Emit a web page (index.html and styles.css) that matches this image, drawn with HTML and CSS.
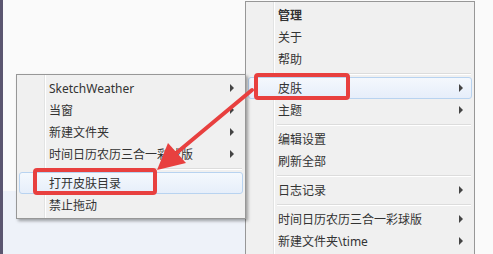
FILE: index.html
```html
<!DOCTYPE html>
<html lang="zh-CN">
<head>
    <meta charset="UTF-8">
    <title>皮肤菜单</title>
    <link rel="stylesheet" href="styles.css">
</head>
<body>
    <div class="desktop">
        <!-- 右键主菜单 -->
        <div class="menu menu-main">
            <div class="item bold">管理</div>
            <div class="item">关于</div>
            <div class="item">帮助</div>
            <div class="sep"></div>
            <div class="item hot">皮肤<span class="arrow"></span></div>
            <div class="item">主题<span class="arrow"></span></div>
            <div class="sep"></div>
            <div class="item">编辑设置</div>
            <div class="item">刷新全部</div>
            <div class="sep"></div>
            <div class="item">日志记录<span class="arrow"></span></div>
            <div class="sep"></div>
            <div class="item">时间日历农历三合一彩球版<span class="arrow"></span></div>
            <div class="item">新建文件夹\time<span class="arrow"></span></div>
        </div>

        <!-- 皮肤子菜单 -->
        <div class="menu menu-sub">
            <div class="item">SketchWeather<span class="arrow"></span></div>
            <div class="item">当窗<span class="arrow"></span></div>
            <div class="item">新建文件夹<span class="arrow"></span></div>
            <div class="item">时间日历农历三合一彩球版<span class="arrow"></span></div>
            <div class="sep"></div>
            <div class="item hot">打开皮肤目录</div>
            <div class="item">禁止拖动</div>
        </div>

        <!-- 红色标注 -->
        <svg class="marks" width="493" height="254" viewBox="0 0 493 254">
            <rect x="256" y="75" width="92" height="23" rx="2"></rect>
            <rect x="35" y="170" width="120" height="23" rx="2"></rect>
            <line x1="252" y1="90" x2="174" y2="155"></line>
            <polygon points="157,170 168,143 186,163"></polygon>
        </svg>
    </div>
</body>
</html>
```

FILE: styles.css
```css
body {
    margin: 0;
    font-family: "Noto Sans", "Noto Sans CJK SC", sans-serif;
    font-size: 12px;
    color: #333;
}

.desktop {
    position: relative;
    width: 493px;
    height: 254px;
    overflow: hidden;
    background: linear-gradient(#eef2f9, #eef2f9) 0 191px / 245px 63px no-repeat, #fafafa;
    box-shadow: inset 3px 0 #5b5670;
}

.menu {
    position: absolute;
    width: 230px;
    box-sizing: border-box;
    padding: 2px;
    border: 1px solid #979797;
    background: linear-gradient(to right, transparent 27px, #e2e3e3 27px, #e2e3e3 28px, #fff 28px, #fff 29px, transparent 29px), #f0f0f0;
}

.menu-main {
    left: 245px;
    top: 1px;
    height: 270px;
}

.menu-sub {
    left: 16px;
    top: 74px;
    box-shadow: 2px 2px 3px rgba(0, 0, 0, 0.35);
}

.item {
    display: flex;
    align-items: center;
    height: 22px;
    box-sizing: border-box;
    padding: 0 8px 0 29px;
    border: 1px solid transparent;
    border-radius: 3px;
    white-space: nowrap;
}

.item.bold {
    font-weight: bold;
}

.item.hot {
    border-color: #b8d3f0;
    background: linear-gradient(#f4f8fd, #e6eefa);
}

.arrow {
    margin-left: auto;
    width: 0;
    height: 0;
    border-top: 4px solid transparent;
    border-bottom: 4px solid transparent;
    border-left: 4px solid #444;
}

.sep {
    height: 1px;
    margin: 3px 1px 2px 29px;
    background: #dcdcdc;
    border-bottom: 1px solid #fff;
}

.marks {
    position: absolute;
    left: 0;
    top: 0;
    pointer-events: none;
}

.marks rect {
    fill: none;
    stroke: #e8403f;
    stroke-width: 4;
}

.marks line {
    stroke: #e8403f;
    stroke-width: 4;
    stroke-linecap: round;
}

.marks polygon {
    fill: #e8403f;
}
```
